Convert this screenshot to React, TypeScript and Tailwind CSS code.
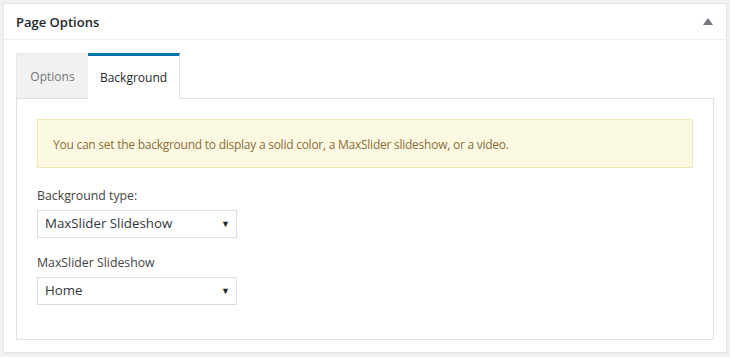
export default function App() {
  const font = { fontFamily: '"Open Sans", "Noto Sans", sans-serif' };

  return (
    <div className="w-[730px] h-[357px] bg-[#f1f1f1] p-[3px]" style={font}>
      <div className="h-[350px] w-[724px] bg-white border border-[#e5e5e5] shadow-[0_1px_1px_rgba(0,0,0,0.04)] flex flex-col">
        {/* Header */}
        <div className="h-[36px] shrink-0 flex items-center justify-between pl-[12px] pr-[12px] border-b border-[#eeeeee]">
          <h2 className="text-[13px] font-semibold text-[#23282d] leading-none pt-[1px]">Page Options</h2>
          <span className="w-0 h-0 border-l-[5px] border-r-[5px] border-b-[7px] border-l-transparent border-r-transparent border-b-[#72777c] mr-[1px]" />
        </div>

        {/* Inside */}
        <div className="flex-1 px-[12px] pt-[13px] pb-[12px] flex flex-col">
          <div className="flex h-[45px] shrink-0 relative z-10">
            <div className="w-[72px] bg-[#f1f1f1] border-l border-t border-[#e5e5e5] flex items-center justify-center text-[12px] text-[#72777c] pt-[2px]">
              Options
            </div>
            <div className="w-[92px] bg-white border-t-[3px] border-t-[#0073aa] border-r border-r-[#e1e1e1] -mb-px h-[46px] flex items-center justify-center text-[12px] text-[#23282d]">
              Background
            </div>
          </div>

          <div className="flex-1 border border-[#e1e1e1] px-[20px] pt-[20px]">
            <div className="h-[49px] bg-[#fcf9e2] border border-[#f0e7b7] flex items-center px-[15px] pt-[2px] text-[12px] tracking-[-0.25px] text-[#8a6d3b]">
              You can set the background to display a solid color, a MaxSlider slideshow, or a video.
            </div>

            <div className="mt-[18px] text-[12.3px] text-[#444] leading-[19px]">Background type:</div>
            <div className="mt-[5px] w-[200px] h-[28px] border border-[#dddddd] bg-white flex items-center justify-between pl-[7px] pr-[6px] text-[13.3px] text-[#32373c]">
              <span>MaxSlider Slideshow</span>
              <span className="text-[9px] text-[#23282d]">▼</span>
            </div>

            <div className="mt-[15px] text-[12.3px] text-[#444] leading-[19px]">MaxSlider Slideshow</div>
            <div className="mt-[5px] w-[200px] h-[28px] border border-[#dddddd] bg-white flex items-center justify-between pl-[7px] pr-[6px] text-[13.3px] text-[#32373c]">
              <span>Home</span>
              <span className="text-[9px] text-[#23282d]">▼</span>
            </div>
          </div>
        </div>
      </div>
    </div>
  );
}
